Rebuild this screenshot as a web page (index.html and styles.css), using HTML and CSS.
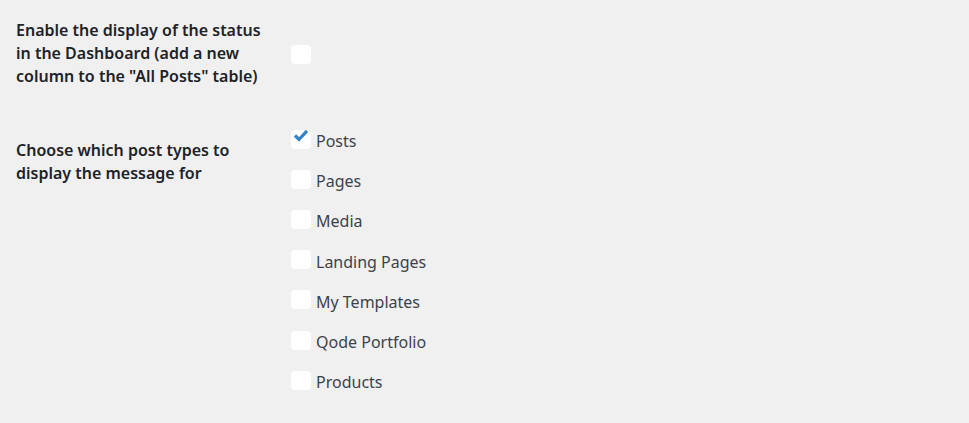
FILE: index.html
```html
<!DOCTYPE html>
<html>
<head>
<meta charset="utf-8">
<link rel="stylesheet" href="styles.css">
</head>
<body>
<div class="form">
  <div class="row row-first">
    <div class="th">Enable the display of the status in the Dashboard (add a new column to the "All Posts" table)</div>
    <div class="td td-center"><span class="cb cb-first"></span></div>
  </div>
  <div class="row row-second">
    <div class="th th-second">Choose which post types to display the message for</div>
    <div class="td list">
      <div class="opt"><span class="cb checked"><svg viewBox="0 0 16 14" width="16" height="14"><polyline points="2,6.5 6,10.5 14,1.8" fill="none" stroke="#3582c4" stroke-width="3.2" stroke-linecap="butt" stroke-linejoin="miter"/></svg></span><span class="lbl">Posts</span></div>
      <div class="opt"><span class="cb"></span><span class="lbl">Pages</span></div>
      <div class="opt"><span class="cb"></span><span class="lbl">Media</span></div>
      <div class="opt"><span class="cb"></span><span class="lbl">Landing Pages</span></div>
      <div class="opt"><span class="cb"></span><span class="lbl">My Templates</span></div>
      <div class="opt"><span class="cb"></span><span class="lbl">Qode Portfolio</span></div>
      <div class="opt"><span class="cb"></span><span class="lbl">Products</span></div>
    </div>
  </div>
</div>
</body>
</html>
```

FILE: styles.css
```css
html, body {
  margin: 0;
  padding: 0;
  background: #f0f0f0;
}
body {
  font-family: "Noto Sans", "Open Sans", sans-serif;
  color: #1d2327;
}
.form {
  padding: 19px 0 0 16px;
}
.row {
  display: grid;
  grid-template-columns: 275px 1fr;
}
.row-second {
  margin-top: 33px;
}
.th {
  font-size: 16px;
  font-weight: 600;
  line-height: 23px;
  width: 255px;
}
.th-second {
  padding-top: 18px;
}
.td-center {
  display: flex;
  align-items: center;
}
.cb {
  display: inline-block;
  position: relative;
  width: 20px;
  height: 19px;
  background: #fff;
  border-radius: 4px;
  flex: none;
}
.cb-first {
  margin-top: 2px;
}
.cb svg {
  position: absolute;
  left: 2px;
  top: -1px;
}
.list {
  display: flex;
  flex-direction: column;
}
.opt {
  display: flex;
  align-items: center;
  height: 40.2px;
}
.opt .cb {
  margin-top: -4px;
}
.lbl {
  margin-left: 5px;
  font-size: 16px;
  color: #3c434a;
}
```
